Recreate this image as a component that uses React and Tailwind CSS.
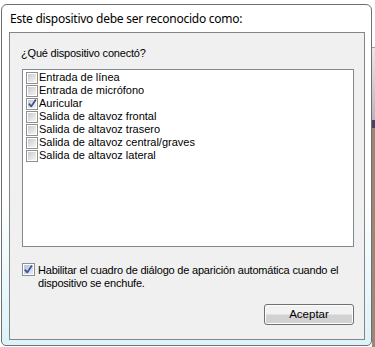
import React from "react";

const devices = [
    { id: 1, name: "Entrada de línea", checked: false },
    { id: 2, name: "Entrada de micrófono", checked: false },
    { id: 3, name: "Auricular", checked: true },
    { id: 4, name: "Salida de altavoz frontal", checked: false },
    { id: 5, name: "Salida de altavoz trasero", checked: false },
    { id: 6, name: "Salida de altavoz central/graves", checked: false },
    { id: 7, name: "Salida de altavoz lateral", checked: false },
];

const CheckBox = ({ checked, focused = false, size = "h-[13px] w-[13px]" }) => (
    <span className={`flex ${size} shrink-0 border border-[#8e8f8f] bg-white p-[1px]`}>
        <span
            className={`flex h-full w-full items-center justify-center ${focused
                ? "bg-linear-to-br from-[#b4c2e2] to-[#e4eaf7]"
                : "bg-linear-to-br from-[#c9cbcf] to-[#f5f5f5]"
                }`}
        >
            {checked && (
                <svg width="11" height="11" viewBox="0 0 11 11" className="-mt-[1px] shrink-0">
                    <path
                        d="M1.8 5.6 L4.2 8.4 L8.9 1.6"
                        fill="none"
                        stroke="#3a5591"
                        strokeWidth="1.7"
                        strokeLinejoin="round"
                    />
                </svg>
            )}
        </span>
    </span>
);

export default function App() {
    return (
        <div
            className="flex h-[347px] w-[375px] overflow-hidden bg-white"
            style={{ fontFamily: '"Liberation Sans", Arial, sans-serif' }}
        >
            <div className="ml-[1px] mt-[4px] flex h-[342px] w-[371px] flex-col rounded-t-[6px] rounded-b-[5px] border border-[#6f6f6f] bg-linear-to-b from-white from-55% to-[#dcf3f9]">
                <div
                    className="flex h-[27px] items-center px-[8px] text-[12px] leading-[15px] tracking-[-0.25px] text-black"
                    style={{ fontFamily: '"Noto Sans", sans-serif' }}
                >
                    Este dispositivo debe ser reconocido como:
                </div>
                <div className="mb-[5px] ml-[7px] mr-[6px] flex flex-1 flex-col border border-[#858585] bg-[#f0f0f0] pl-[11px] pr-[10px]">
                    <div className="mt-[13px] text-[11px] leading-[14px] tracking-[-0.2px] text-black">
                        ¿Qué dispositivo conectó?
                    </div>
                    <div className="ml-[1px] mt-[9px] h-[178px] border border-[#828790] bg-white pl-[3px] pt-[1px]">
                        {devices.map((item) => (
                            <div key={item.id} className="flex h-[13px] items-center gap-[1px]">
                                <CheckBox checked={item.checked} size="h-[12px] w-[12px]" />
                                <span className="text-[11px] leading-[13px] text-black">
                                    {item.name}
                                </span>
                            </div>
                        ))}
                    </div>
                    <div className="ml-[1px] mt-[15px] flex items-start gap-[3px]">
                        <span className="mt-[1px]">
                            <CheckBox checked focused />
                        </span>
                        <span className="mt-[2px] whitespace-nowrap text-[11px] leading-[13px] tracking-[-0.2px] text-black">
                            Habilitar el cuadro de diálogo de aparición automática cuando el
                            <br />
                            dispositivo se enchufe.
                        </span>
                    </div>
                    <div className="mt-auto mb-[14px] flex justify-end">
                        <button className="flex h-[21px] w-[90px] items-center justify-center rounded-[3px] border border-[#707070] bg-linear-to-b from-[#f2f2f2] from-45% to-[#d2d2d2] to-55% text-[11.5px] text-black shadow-[inset_0_0_0_1px_#fcfcfc]">
                            Aceptar
                        </button>
                    </div>
                </div>
            </div>
            <div className="mt-[4px] flex w-[3px] flex-col">
                <div className="h-[44px] border-b border-[#9a9a9a] bg-white" />
                <div className="h-[72px] bg-linear-to-b from-[#e8e8ea] to-[#b8b6bc]" />
                <div className="h-[8px] bg-[#4a4260]" />
                <div className="flex-1 bg-[#9d8578]" />
            </div>
        </div>
    );
}
